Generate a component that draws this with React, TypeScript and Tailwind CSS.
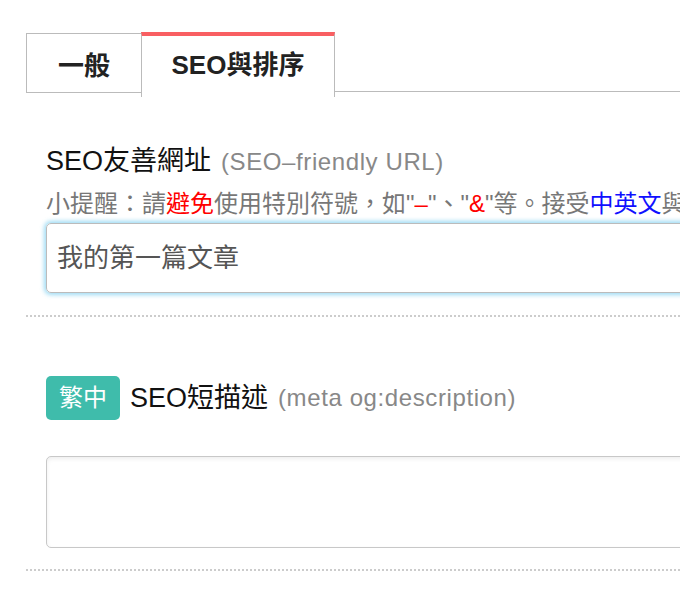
const FONT = "font-['Liberation_Sans','Noto_Sans_CJK_TC',sans-serif]";

function Tabs() {
  return (
    <div className="flex items-start pl-[26px] pt-[32px]">
      <div className="w-[115px] h-[60px] mt-px border-l border-t border-b border-[#bbb] flex items-center justify-center pt-[5px] text-[26px] font-bold text-[#222] leading-[30px]">
        一般
      </div>
      <div className="w-[194px] h-[65px] border-l border-r border-[#bbb] border-t-4 border-t-[#f95f62] bg-white flex items-center justify-center pb-[3px] text-[26px] font-bold text-[#222] leading-[30px]">
        SEO與排序
      </div>
      <div className="flex-1 h-[60px] border-b border-[#bbb]" />
    </div>
  );
}

function Divider() {
  return <div className="ml-[26px] border-b-2 border-dotted border-[#ccc]" />;
}

export default function App() {
  return (
    <div className={`w-full h-[610px] overflow-hidden bg-white ${FONT}`}>
      <div className="w-[1000px]">
        <Tabs />

        <div className="pl-[46px] pt-[48px]">
          <div className="flex items-baseline whitespace-nowrap leading-[32px]">
            <span className="text-[27px] text-[#111]">SEO友善網址</span>
            <span className="ml-[10px] text-[24px] tracking-[0.6px] text-[#888]">(SEO–friendly URL)</span>
          </div>
          <div className="mt-[12px] text-[24px] leading-[28px] text-[#777] whitespace-nowrap">
            小提醒：請<span className="text-[#f00]">避免</span>使用特別符號，如"<span className="text-[#f00]">–</span>"、"<span className="text-[#f00]">&amp;</span>"等。接受<span className="text-[#1010ff]">中英文</span>與數字
          </div>
          <div className="mt-[5px] h-[70px] rounded-[5px] border border-[#bbb] shadow-[0_0_4px_2px_rgba(120,205,240,0.7)] flex items-center pl-[10px] text-[26px] text-[#555]">
            我的第一篇文章
          </div>
        </div>

        <div className="pt-[22px]">
          <Divider />
        </div>

        <div className="pl-[46px] pt-[59px]">
          <div className="flex items-center whitespace-nowrap">
            <span className="h-[44px] px-[13px] rounded-[5px] bg-[#3fbcab] text-white text-[24px] leading-[44px]">繁中</span>
            <span className="ml-[10px] text-[27px] text-[#111] leading-[32px]">SEO短描述</span>
            <span className="ml-[10px] text-[24px] tracking-[0.6px] text-[#888] leading-[32px]">(meta og:description)</span>
          </div>
          <div className="mt-[36px] h-[92px] rounded-[5px] border border-[#c8c8c8] shadow-[inset_0_2px_4px_rgba(0,0,0,0.07)]" />
        </div>

        <div className="pt-[21px]">
          <Divider />
        </div>
      </div>
    </div>
  );
}
